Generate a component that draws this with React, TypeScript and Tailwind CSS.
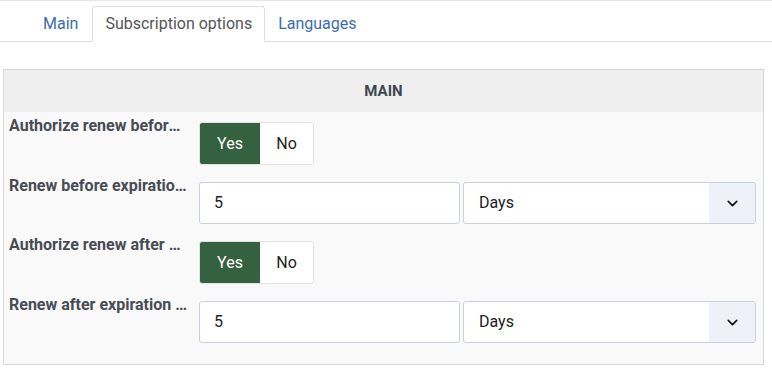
import { ChevronDown } from 'lucide-react';

function Toggle() {
  return (
    <div className="flex h-[43px] rounded-[3px] border border-[#e2e2e2] overflow-hidden text-[16px]">
      <div className="w-[60px] bg-[#34613f] text-white flex items-center justify-center">Yes</div>
      <div className="w-[53px] bg-white text-[#222] flex items-center justify-center">No</div>
    </div>
  );
}

function NumberUnit({ value }: { value: string }) {
  return (
    <div className="flex gap-[3px] text-[16px] text-[#222]">
      <div className="w-[261px] h-[42px] bg-white border border-[#c9d1dc] rounded-[3px] flex items-center pl-[14px]">{value}</div>
      <div className="w-[293px] h-[42px] bg-white border border-[#c9d1dc] rounded-[3px] flex items-center overflow-hidden">
        <span className="flex-1 pl-[15px]">Days</span>
        <span className="w-[46px] h-full bg-[#eef2f8] flex items-center justify-center">
          <ChevronDown className="w-[17px] h-[17px] text-[#111]" strokeWidth={2.25} />
        </span>
      </div>
    </div>
  );
}

function Row({ label, children }: { label: string; children: React.ReactNode }) {
  return (
    <div className="flex items-start">
      <div className="w-[195px] pl-[5px] pr-[10px] mt-[-4px] leading-4 text-[16px] font-bold text-[#474c55] truncate">{label}</div>
      {children}
    </div>
  );
}

export default function App() {
  return (
    <div className="w-[772px] h-[373px] bg-white font-['Roboto',sans-serif] overflow-hidden">
      <div className="border-t border-b border-t-[#e6e6e6] border-b-[#dedede] pt-[5px] pl-[29px] flex text-[16px]">
        <div className="px-[13px] h-[35px] flex items-center text-[#3a6db0] border border-transparent">Main</div>
        <div className="px-[12px] h-[36px] -mb-px flex items-center text-[#555] bg-white border border-[#dedede] border-b-white rounded-t-[4px]">Subscription options</div>
        <div className="px-[12px] h-[35px] flex items-center text-[#3a6db0] border border-transparent">Languages</div>
      </div>
      <div className="mt-[27px] mx-[3px] w-[761px] border border-[#d6d6d6] bg-[#f9f9f9]">
        <div className="h-[42px] bg-[#efefef] flex items-center justify-center text-[15px] font-bold text-[#3e4650]">MAIN</div>
        <div className="pt-[10px] pb-[21px] flex flex-col gap-[17px]">
          <Row label="Authorize renew before expiration">
            <Toggle />
          </Row>
          <Row label="Renew before expiration period">
            <NumberUnit value="5" />
          </Row>
          <Row label="Authorize renew after expiration">
            <Toggle />
          </Row>
          <Row label="Renew after expiration period">
            <NumberUnit value="5" />
          </Row>
        </div>
      </div>
    </div>
  );
}
